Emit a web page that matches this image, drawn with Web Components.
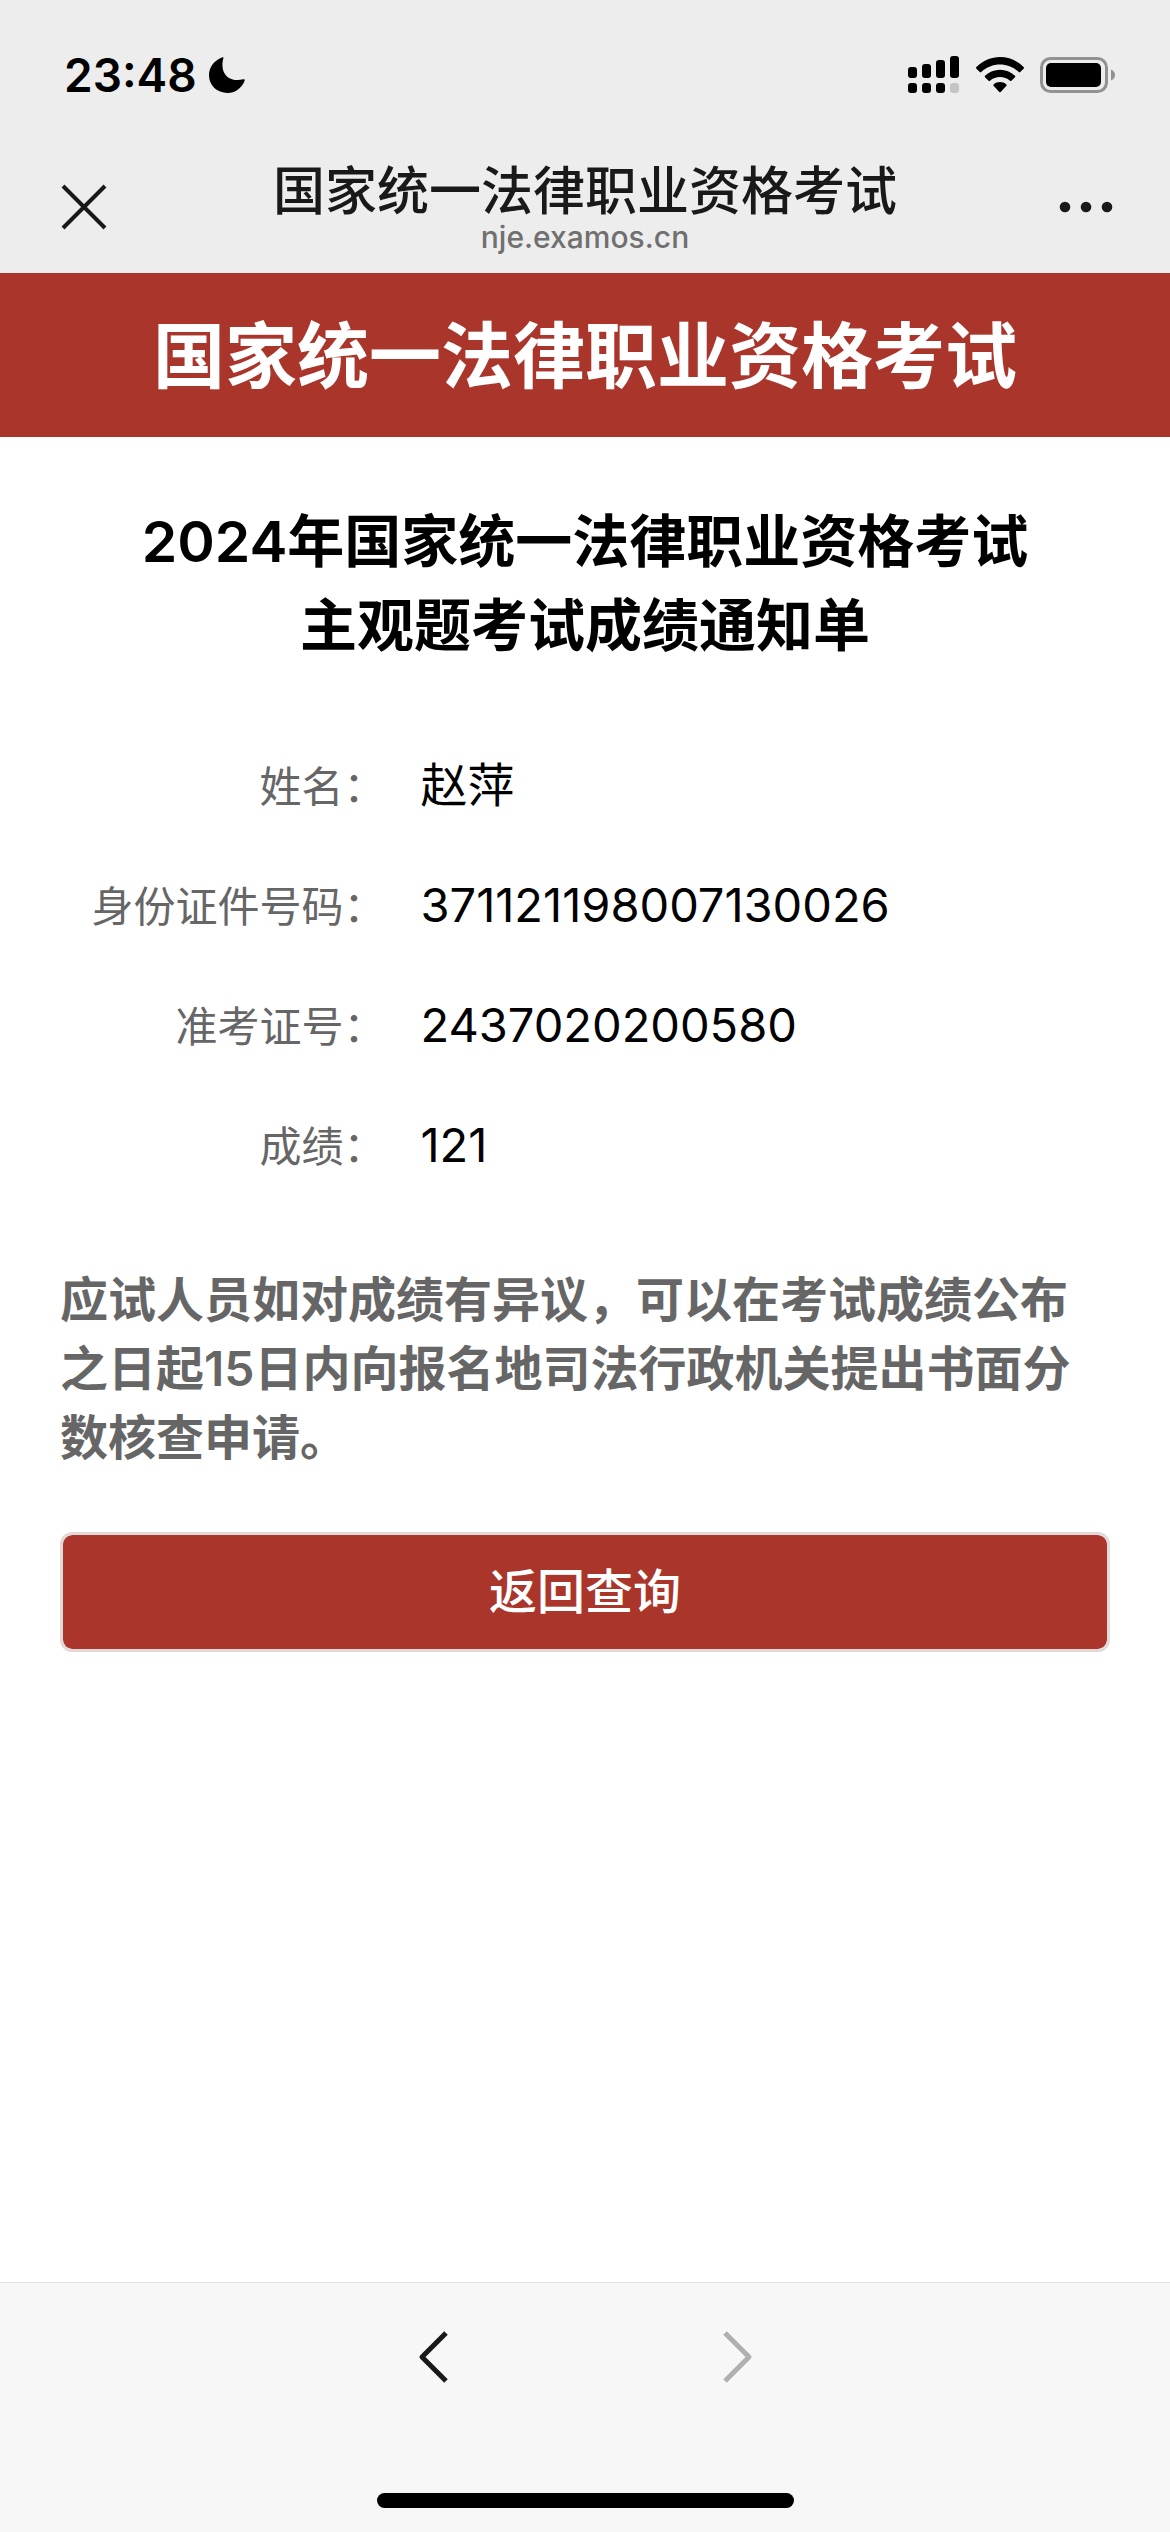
<!DOCTYPE html>
<html lang="zh-CN">
<head>
<meta charset="utf-8">
<meta name="viewport" content="width=device-width">
<title>国家统一法律职业资格考试</title>
<style>
    body {
        margin: 0;
        background: #fff;
        font-family: Inter, "Noto Sans CJK SC", sans-serif;
    }
</style>
</head>

<template id="app-shell-template">
    <style>
        :host {
            display: flex;
            flex-direction: column;
            min-height: 100vh;
        }
        main {
            padding: 63px 60px;
        }
        slot[name="footer"] {
            display: block;
            margin-top: auto;
        }
    </style>
    <header><slot name="header"></slot></header>
    <main><slot></slot></main>
    <slot name="footer"></slot>
</template>

<template id="status-bar-template">
    <style>
        :host {
            display: flex;
            align-items: center;
            justify-content: space-between;
            box-sizing: border-box;
            height: 141px;
            padding: 8px 54px 0 64px;
            background: #ededed;
            color: #000;
            font-size: 46px;
            font-weight: 600;
            line-height: 56px;
        }
        div {
            display: flex;
            align-items: center;
            gap: 12px;
        }
        .icons {
            gap: 16px;
        }
        svg {
            display: block;
        }
    </style>
    <div>
        <slot></slot>
        <svg width="36" height="36" viewBox="0 0 36 36"><path d="M13 0.6C14.2 0 14.8 0.4 14.3 1.4C11.4 12 15.5 26.2 34.4 22.3C35.8 22 36 22.8 35.5 24C32.5 31.4 26 36 18.500 36C8 36 0 28.500 0 18.300C0 10.400 5 3.600 13 0.600Z"/></svg>
    </div>
    <div class="icons">
        <svg width="52" height="38" viewBox="0 0 52 38">
            <rect x="0" y="11" width="9" height="11" rx="3"/>
            <rect x="14" y="8" width="9" height="14" rx="3"/>
            <rect x="28" y="4" width="9" height="18" rx="3"/>
            <rect x="42" y="0" width="9" height="22" rx="3"/>
            <rect x="0" y="27" width="9" height="10" rx="3"/>
            <rect x="14" y="27" width="9" height="10" rx="3"/>
            <rect x="28" y="27" width="9" height="10" rx="3"/>
            <rect x="42" y="27" width="9" height="10" rx="3" fill="#c4c4c4"/>
        </svg>
        <svg width="48" height="36" viewBox="0 0 48 36">
            <path d="M0.400 10.100C13.400 -3.300 34.600 -3.300 47.600 10.100Q48.300 10.900 47.600 11.700L44.200 15.100Q43.500 15.700 42.800 15.100C32.300 5.100 15.700 5.100 5.200 15.100Q4.500 15.700 3.800 15.100L0.400 11.700Q-0.300 10.900 0.400 10.100Z"/>
            <path d="M9 18.800C17.300 10.800 30.700 10.800 39 18.800Q39.700 19.500 39 20.200L35.400 23.700Q34.700 24.300 34 23.700C28.400 18.700 19.600 18.700 14 23.700Q13.300 24.300 12.600 23.700L9 20.200Q8.300 19.500 9 18.800Z"/>
            <path d="M17.600 27.400C21.300 24.300 26.700 24.300 30.400 27.400Q31.200 28.100 30.400 28.800L24.700 34.900Q24 35.600 23.300 34.900L17.600 28.800Q16.800 28.100 17.600 27.400Z"/>
        </svg>
        <svg width="76" height="36" viewBox="0 0 76 36">
            <rect x="1.500" y="1.500" width="65" height="33" rx="9" fill="none" stroke="#929292" stroke-width="3"/>
            <rect x="6" y="6" width="55" height="24" rx="5"/>
            <path d="M71 12.500Q75 14 75 18T71 23.500Z" fill="#929292"/>
        </svg>
    </div>
</template>

<template id="nav-bar-template">
    <style>
        :host {
            display: flex;
            align-items: center;
            justify-content: space-between;
            box-sizing: border-box;
            min-height: 132px;
            padding: 0 56px;
            background: #ededed;
            color: #191919;
        }
        button {
            display: flex;
            padding: 0;
            border: 0;
            background: none;
            color: inherit;
        }
        .titles {
            text-align: center;
        }
        .title {
            font-size: 52px;
            font-weight: 500;
            line-height: 60px;
        }
        .host {
            color: #707070;
            font-size: 30px;
            font-weight: 500;
            line-height: 30px;
        }
    </style>
    <button type="button" aria-label="关闭">
        <svg width="56" height="56" viewBox="0 0 56 56"><path d="M7 7L49 49M49 7L7 49" fill="none" stroke="currentColor" stroke-width="4"/></svg>
    </button>
    <div class="titles">
        <div class="title"><slot></slot></div>
        <div class="host"><slot name="host"></slot></div>
    </div>
    <button type="button" aria-label="更多">
        <svg width="56" height="56" viewBox="0 0 56 56" fill="currentColor"><circle cx="7" cy="28" r="5.300"/><circle cx="28" cy="28" r="5.300"/><circle cx="49" cy="28" r="5.300"/></svg>
    </button>
</template>

<template id="site-banner-template">
    <style>
        :host {
            display: block;
            padding: 41px 0 39px;
            background: #a9352b;
            color: #fff;
            font-size: 72px;
            font-weight: 600;
            line-height: 84px;
            text-align: center;
        }
    </style>
    <slot></slot>
</template>

<template id="notice-title-template">
    <style>
        h1 {
            margin: 0 0 57px;
            color: #000;
            font-size: 57px;
            font-weight: 600;
            line-height: 84px;
            text-align: center;
        }
        :host {
            display: block;
        }
    </style>
    <h1><slot></slot></h1>
</template>

<template id="result-field-template">
    <style>
        :host {
            display: flex;
            align-items: baseline;
            gap: 35px;
            padding: 24px 0;
            font-size: 47px;
            line-height: 72px;
        }
        .label {
            flex: 0 0 31%;
            color: #666;
            font-size: 42px;
            line-height: 60px;
            text-align: right;
        }
        .value {
            flex: 1;
            color: #000;
        }
    </style>
    <span class="label"></span>
    <span class="value"><slot></slot></span>
</template>

<template id="notice-text-template">
    <style>
        :host {
            display: block;
        }
        p {
            margin: 60px 0;
            color: #666;
            font-size: 48px;
            font-weight: 600;
            line-height: 69px;
        }
    </style>
    <p><slot></slot></p>
</template>

<template id="primary-button-template">
    <style>
        :host {
            display: block;
        }
        button {
            display: block;
            width: 100%;
            padding: 21px;
            border: 3px solid #e2dad8;
            border-radius: 12px;
            background: #a9352b;
            background-clip: padding-box;
            color: #fff;
            font: inherit;
            font-size: 48px;
            font-weight: 500;
            line-height: 72px;
        }
    </style>
    <button type="button"><slot></slot></button>
</template>

<template id="browser-toolbar-template">
    <style>
        :host {
            display: flex;
            flex-direction: column;
            align-items: center;
            border-top: 1px solid #e2e2e2;
            background: #f7f7f7;
        }
        nav {
            display: flex;
            gap: 243px;
            padding: 44px 0 106px;
        }
        button {
            display: flex;
            padding: 0;
            border: 0;
            background: none;
            color: #191919;
        }
        button:disabled {
            color: #b0b0b0;
        }
        .indicator {
            width: 417px;
            height: 15px;
            margin-bottom: 24px;
            border-radius: 8px;
            background: #000;
        }
    </style>
    <nav>
        <button type="button" aria-label="后退">
            <svg width="60" height="60" viewBox="0 0 60 60"><path d="M42 6L18 30L42 54" fill="none" stroke="currentColor" stroke-width="5" stroke-linejoin="round"/></svg>
        </button>
        <button type="button" aria-label="前进" disabled>
            <svg width="60" height="60" viewBox="0 0 60 60"><path d="M18 6L42 30L18 54" fill="none" stroke="currentColor" stroke-width="5" stroke-linejoin="round"/></svg>
        </button>
    </nav>
    <div class="indicator"></div>
</template>

<body>
    <app-shell>
        <status-bar slot="header">23:48</status-bar>
        <nav-bar slot="header">国家统一法律职业资格考试<span slot="host">nje.examos.cn</span></nav-bar>
        <site-banner slot="header">国家统一法律职业资格考试</site-banner>

        <notice-title>2024年国家统一法律职业资格考试<br>主观题考试成绩通知单</notice-title>
        <result-field label="姓名">赵萍</result-field>
        <result-field label="身份证件号码">371121198007130026</result-field>
        <result-field label="准考证号">2437020200580</result-field>
        <result-field label="成绩">121</result-field>
        <notice-text>应试人员如对成绩有异议，可以在考试成绩公布之日起15日内向报名地司法行政机关提出书面分数核查申请。</notice-text>
        <primary-button>返回查询</primary-button>

        <browser-toolbar slot="footer"></browser-toolbar>
    </app-shell>
</body>
<script>
    class TemplateElement extends HTMLElement {
        constructor() {
            super();
            const template = document.querySelector(`#${this.localName}-template`);
            const clone = document.importNode(template.content, true);
            this.attachShadow({ mode: 'open' }).appendChild(clone);
        }
    }

    customElements.define('app-shell', class extends TemplateElement {});
    customElements.define('status-bar', class extends TemplateElement {});
    customElements.define('nav-bar', class extends TemplateElement {});
    customElements.define('site-banner', class extends TemplateElement {});
    customElements.define('notice-title', class extends TemplateElement {});
    customElements.define('notice-text', class extends TemplateElement {});
    customElements.define('primary-button', class extends TemplateElement {});
    customElements.define('browser-toolbar', class extends TemplateElement {});

    customElements.define('result-field', class extends TemplateElement {
        static get observedAttributes() {
            return ['label'];
        }

        attributeChangedCallback(name, oldValue, newValue) {
            this.shadowRoot.querySelector('.label').textContent = `${newValue}：`;
        }
    });
</script>
</html>
